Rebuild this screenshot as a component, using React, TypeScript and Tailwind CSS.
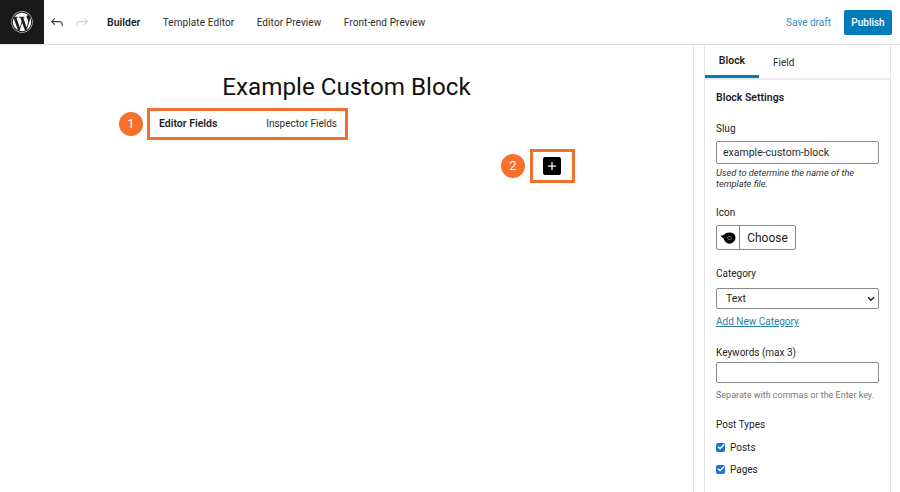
import { FaWordpress } from 'react-icons/fa'
import { Check, ChevronDown, Plus } from 'lucide-react'

const NAV = ['Template Editor', 'Editor Preview', 'Front-end Preview']

function Checkbox({ label }: { label: string }) {
  return (
    <div className="flex items-center h-[14px] gap-[5px] text-[10px] text-[#1e1e1e]">
      <span className="w-[9px] h-[9px] rounded-[2px] bg-[#1a73d9] flex items-center justify-center">
        <Check size={8} strokeWidth={4} className="text-white" />
      </span>
      {label}
    </div>
  )
}

export default function App() {
  return (
    <div className="w-[900px] h-[492px] overflow-hidden bg-white flex flex-col font-['Roboto',sans-serif] text-[#1e1e1e]">
      {/* Header */}
      <header className="h-[45px] shrink-0 flex items-center border-b border-[#e0e0e0]">
        <div className="w-[44px] h-[44px] bg-[#1a1a1a] flex items-center justify-center">
          <FaWordpress size={22} className="text-white" />
        </div>
        <svg viewBox="0 0 24 24" className="w-[18px] h-[18px] ml-[4px] fill-[#3a3a3a]">
          <path d="M18.3 11.7c-.6-.6-1.4-.9-2.3-.9H6.7l2.9-3.3-1.1-1-4.5 5L8.5 16l1-1-2.7-2.7H16c.5 0 .9.2 1.3.5 1 1 1 3.4 1 4.5v.3h1.5v-.2c0-1.5 0-4.3-1.5-5.7z" />
        </svg>
        <svg viewBox="0 0 24 24" className="w-[18px] h-[18px] ml-[7px] fill-[#d4d4d4]">
          <path d="M15.6 6.5l-1.1 1 2.9 3.3H8c-.9 0-1.7.3-2.3.9-1.4 1.5-1.4 4.2-1.4 5.6v.2h1.5v-.3c0-1.1 0-3.5 1-4.5.3-.3.7-.5 1.3-.5h9.2L14.5 15l1.1 1.1 4.6-4.6-4.6-5z" />
        </svg>
        <nav className="flex items-baseline ml-[16px] pt-[2px] gap-[22.4px] text-[10px] tracking-[0.1px]">
          <span className="font-semibold text-[10.5px] tracking-normal">Builder</span>
          {NAV.map(item => (
            <span key={item} className="text-[#2c2c2c]">{item}</span>
          ))}
        </nav>
        <span className="ml-auto text-[10px] text-[#2f8fbf]">Save draft</span>
        <button className="ml-[13px] mr-[8px] w-[48px] h-[25px] bg-[#007cba] text-white text-[10px] font-medium rounded-[2px]">
          Publish
        </button>
      </header>

      <div className="flex-1 flex min-h-0">
        {/* Canvas */}
        <main className="w-[693px] shrink-0 flex flex-col">
          <h1 className="mt-[26px] text-center text-[24.2px] leading-[33px] text-[#111]">Example Custom Block</h1>
          <div className="relative mt-[4px] ml-[147px] w-[201px] h-[32px] border-[3px] border-[#f0702e] flex items-center pl-[9px] pr-[8px] text-[10px]">
            <div className="absolute top-1/2 -translate-y-1/2 left-[-31px] w-6 h-6 rounded-full bg-[#f7702c] text-white text-[13px] flex items-center justify-center">
              1
            </div>
            <div className="w-full flex items-baseline justify-between">
              <span className="font-semibold text-[10.5px]">Editor Fields</span>
              <span className="text-[#2c2c2c]">Inspector Fields</span>
            </div>
          </div>
          <div className="relative mt-[9px] ml-[530px] w-[45px] h-[34px] border-[3px] border-[#f0702e] flex items-center justify-center pr-[1px]">
            <div className="absolute top-1/2 -translate-y-1/2 left-[-32px] w-6 h-6 rounded-full bg-[#f7702c] text-white text-[13px] flex items-center justify-center">
              2
            </div>
            <div className="w-[18px] h-[18px] rounded-[2px] bg-black flex items-center justify-center">
              <Plus size={12} strokeWidth={2.5} className="text-white" />
            </div>
          </div>
        </main>

        {/* Sidebar */}
        <div className="w-[207px] shrink-0 border-l border-[#e4e4e4] pl-[10px] pr-[9px]">
          <aside className="h-full border-x border-[#e4e4e4]">
            <div className="h-[35px] flex border-b-[2px] border-[#ececec] text-[10px]">
              <div className="w-[54px] h-[33px] pt-[2px] flex items-center justify-center font-semibold text-[10.5px] border-b-[3px] border-[#007cba]">
                Block
              </div>
              <div className="ml-[14px] flex items-center pt-[1px] text-[#2c2c2c]">Field</div>
            </div>
            <div className="px-[11px] pt-[11px] text-[10px]">
              <h2 className="font-semibold text-[10.5px] leading-[14px]">Block Settings</h2>

              <label className="block mt-[17px] leading-[14px]">Slug</label>
              <div className="mt-[5px] h-[23px] border border-[#8a8a8a] rounded-[2px] flex items-center pl-[6px] text-[10.5px] text-[#2c2c2c]">
                example-custom-block
              </div>
              <p className="mt-[3px] text-[9.25px] leading-[11px] italic text-[#333]">
                Used to determine the name of the template file.
              </p>

              <label className="block mt-[17px] leading-[14px]">Icon</label>
              <div className="mt-[5px] w-[80px] h-[25px] border border-[#8a8a8a] rounded-[2px] flex items-center">
                <div className="w-[23px] h-full border-r border-[#8a8a8a] flex items-center justify-center">
                  <svg viewBox="0 0 16 16" className="w-[17px] h-[17px]">
                    <path d="M0.5 6.5 L4 5.5 C5.5 3 11 2.5 13.5 5 C15 7 15 10 13 12 C11 14 7.5 14.5 5.5 12.5 C4.5 11.5 3.5 10 3.5 9 Z" fill="#000" />
                    <circle cx="9" cy="8.5" r="1.8" fill="none" stroke="#888" strokeWidth="0.7" />
                  </svg>
                </div>
                <span className="flex-1 text-center text-[12px]">Choose</span>
              </div>

              <label className="block mt-[17px] leading-[14px]">Category</label>
              <div className="mt-[7px] h-[21px] border border-[#8a8a8a] rounded-[2px] flex items-center justify-between pl-[9px] pr-[2px] text-[10.5px]">
                Text
                <ChevronDown size={10} strokeWidth={3.5} className="text-[#222]" />
              </div>
              <a className="block mt-[6px] leading-[14px] text-[#2a7ea8] underline">Add New Category</a>

              <label className="block mt-[17px] leading-[14px]">Keywords (max 3)</label>
              <div className="mt-[2px] h-[21px] border border-[#8a8a8a] rounded-[2px]" />
              <p className="mt-[6px] text-[9px] leading-[12px] text-[#777] whitespace-nowrap">Separate with commas or the Enter key.</p>

              <label className="block mt-[17px] leading-[14px]">Post Types</label>
              <div className="mt-[8px] flex flex-col gap-[8px]">
                <Checkbox label="Posts" />
                <Checkbox label="Pages" />
              </div>
            </div>
          </aside>
        </div>
      </div>
    </div>
  )
}
